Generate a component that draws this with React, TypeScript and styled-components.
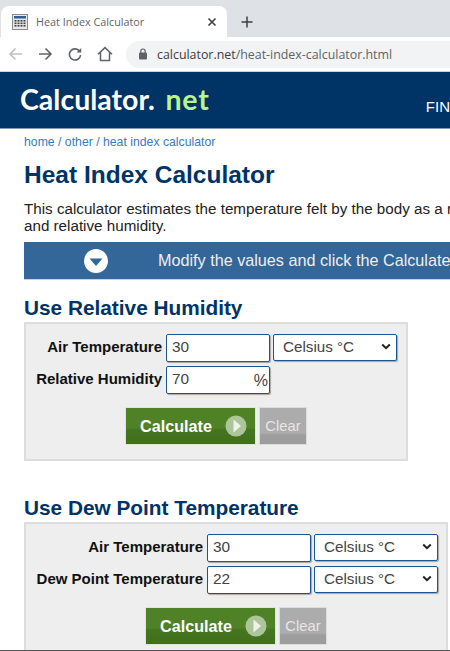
import React from "react";
import styled, { createGlobalStyle } from "styled-components";

const GlobalStyle = createGlobalStyle`
  html, body {
    margin: 0;
    padding: 0;
    background: #ffffff;
    overflow: hidden;
  }
  * {
    box-sizing: border-box;
  }
`;

const Page = styled.div`
  width: 450px;
  height: 651px;
  display: flex;
  flex-direction: column;
  overflow: hidden;
  font-family: "Liberation Sans", Arial, sans-serif;
  color: #222;
  border-bottom: 1px solid #555;
`;

const TabStrip = styled.div`
  height: 37px;
  flex: none;
  display: flex;
  align-items: flex-end;
  padding-left: 1px;
  background: #dee1e6;
`;

const Tab = styled.div`
  width: 226px;
  height: 31px;
  display: flex;
  align-items: center;
  padding: 0 10px 0 11px;
  background: #ffffff;
  border-radius: 8px 8px 0 0;
  font-family: "Open Sans", sans-serif;
  font-size: 10.8px;
  color: #5f6368;
`;

const TabTitle = styled.span`
  flex: 1;
  margin-left: 8px;
`;

const NewTab = styled.div`
  width: 40px;
  height: 31px;
  display: flex;
  align-items: center;
  justify-content: center;
  color: #3c4043;
`;

const Toolbar = styled.div`
  height: 35px;
  flex: none;
  display: flex;
  align-items: center;
  background: #ffffff;
  border-bottom: 1px solid #d0d3d8;
`;

const NavButton = styled.div<{ $dim?: boolean }>`
  width: 30px;
  height: 24px;
  display: flex;
  align-items: center;
  justify-content: center;
  color: ${({ $dim }) => ($dim ? "#bfc1c4" : "#5f6368")};
`;

const AddressBar = styled.div`
  flex: 1;
  height: 27px;
  margin-left: 6px;
  display: flex;
  align-items: center;
  gap: 9px;
  padding-left: 12px;
  background: #f1f3f4;
  border-radius: 14px 0 0 14px;
  font-family: "Open Sans", sans-serif;
  font-size: 12.4px;
  color: #5f6368;
  white-space: nowrap;
`;

const Host = styled.span`
  color: #3c4043;
`;

const SiteHeader = styled.header`
  height: 57px;
  flex: none;
  display: flex;
  align-items: center;
  justify-content: space-between;
  padding-left: 20px;
  background: #003366;
  border-bottom: 1px solid #7f9ab5;
  overflow: hidden;
`;

const Logo = styled.div`
  font-family: "Lato", sans-serif;
  font-size: 28.5px;
  font-weight: 700;
  line-height: 1;
  color: #ffffff;
  margin-top: -1px;
  white-space: nowrap;
`;

const LogoTld = styled.span`
  color: #b9f587;
  margin-left: 3px;
  letter-spacing: 0.8px;
`;

const HeaderNav = styled.span`
  margin-top: 13px;
  font-size: 15px;
  color: #ffffff;
`;

const Main = styled.main`
  flex: 1;
  min-height: 0;
  padding-left: 24px;
  overflow: hidden;
`;

const Breadcrumb = styled.div`
  margin-top: 6px;
  font-size: 12.25px;
  line-height: 14px;
  color: #3a7ab5;
`;

const Title = styled.h1`
  margin: 11px 0 0;
  font-size: 24.5px;
  line-height: 30px;
  font-weight: 700;
  color: #003366;
`;

const Intro = styled.p`
  margin: 10px 0 0;
  font-size: 15.2px;
  line-height: 17px;
  color: #222;
  white-space: nowrap;
`;

const Banner = styled.div`
  width: 426px;
  height: 38px;
  margin-top: 8px;
  display: flex;
  align-items: center;
  padding-left: 60px;
  gap: 50px;
  background: #336699;
  border-bottom: 1px solid #c5d3e2;
  font-size: 16.2px;
  color: #eeeeee;
  white-space: nowrap;
  overflow: hidden;
`;

const BannerIcon = styled.svg`
  flex: none;
`;

const SectionTitle = styled.h2<{ $top: number }>`
  margin: ${({ $top }) => $top}px 0 2px;
  font-size: 20.8px;
  line-height: 25px;
  font-weight: 700;
  color: #003366;
`;

const Panel = styled.div<{ $width: number }>`
  width: ${({ $width }) => $width}px;
  padding: 10px 10px 14px;
  background: #eeeeee;
  border: 2px solid #dddddd;
`;

const FormRow = styled.div<{ $labelWidth: number }>`
  display: grid;
  grid-template-columns: ${({ $labelWidth }) => $labelWidth}px 104px 123px;
  column-gap: 4px;
  align-items: start;
  height: 32px;
`;

const Label = styled.label`
  height: 28px;
  line-height: 26px;
  text-align: right;
  font-size: 15px;
  font-weight: 700;
  color: #111;
  white-space: nowrap;
`;

const InputBox = styled.div`
  position: relative;
  height: 28px;
  display: flex;
  align-items: center;
  padding: 0 0 2px 5px;
  background: #ffffff;
  border: 1px solid #1d5590;
  border-radius: 2px;
  box-shadow: 1px 1px 1px rgba(0, 0, 0, 0.3);
  font-size: 15.4px;
  color: #444;
`;

const Suffix = styled.span`
  position: absolute;
  right: 1px;
  top: 5px;
  font-size: 16px;
  color: #444;
`;

const SelectBox = styled.div`
  height: 27px;
  margin-left: -1px;
  display: flex;
  align-items: center;
  justify-content: space-between;
  padding: 0 5px 2px 9px;
  background: #ffffff;
  border: 1px solid #1d5590;
  border-radius: 2px;
  box-shadow: 1px 1px 1px rgba(0, 0, 0, 0.3);
  font-size: 15.2px;
  color: #444;
`;

const Actions = styled.div<{ $left: number }>`
  display: flex;
  gap: 3px;
  margin: 9px 0 0 ${({ $left }) => $left}px;
`;

const CalcButton = styled.div`
  width: 131px;
  height: 38px;
  display: flex;
  align-items: center;
  gap: 13px;
  padding-left: 14px;
  background: linear-gradient(#4f8226 0%, #4f8226 55%, #457520 60%, #41701d 100%);
  border: 1px solid #dfe5d9;
  font-size: 16.2px;
  font-weight: 700;
  color: #ffffff;
`;

const ClearButton = styled.div`
  width: 48px;
  height: 38px;
  display: flex;
  align-items: center;
  justify-content: center;
  background: linear-gradient(#acacac 0%, #acacac 70%, #9d9d9d 75%, #9d9d9d 100%);
  border: 1px solid #dcdcdc;
  font-size: 14.8px;
  color: #e6e6e6;
`;

const Favicon = () => (
  <svg width="16" height="16" viewBox="0 0 16 16">
    <rect x="0.5" y="0.5" width="15" height="15" fill="#e8e8e8" stroke="#8a8a8a" />
    <rect x="2" y="2" width="12" height="2.5" fill="#2f5f9a" />
    {[6, 8.5, 11].map((y) =>
      [2.5, 5.5, 8.5, 11.5].map((x) => <rect key={`${x}-${y}`} x={x} y={y} width="2" height="1.6" fill="#444" />),
    )}
  </svg>
);

const CloseIcon = () => (
  <svg width="10" height="10" viewBox="0 0 10 10">
    <path d="M1.5 1.5 8.5 8.5M8.5 1.5 1.5 8.5" stroke="#3c4043" strokeWidth="1.6" />
  </svg>
);

const PlusIcon = () => (
  <svg width="12" height="12" viewBox="0 0 12 12">
    <path d="M6 0.5V11.5M0.5 6H11.5" stroke="#3c4043" strokeWidth="1.5" />
  </svg>
);

const ArrowIcon = ({ flip }: { flip?: boolean }) => (
  <svg width="15" height="14" viewBox="0 0 15 14" style={flip ? { transform: "scaleX(-1)" } : undefined}>
    <path d="M1 7H13M7.5 1.5 13 7 7.5 12.5" fill="none" stroke="currentColor" strokeWidth="1.6" />
  </svg>
);

const ReloadIcon = () => (
  <svg width="14" height="14" viewBox="0 0 14 14">
    <path d="M11.6 4.2A5.6 5.6 0 1 0 12.6 8" fill="none" stroke="currentColor" strokeWidth="1.6" />
    <path d="M13.2 1V5.6H8.6Z" fill="currentColor" />
  </svg>
);

const HomeIcon = () => (
  <svg width="16" height="16" viewBox="0 0 16 16">
    <path d="M1 8.2 8 1.6 15 8.2M3.5 6.4V14.5H12.5V6.4" fill="none" stroke="currentColor" strokeWidth="1.5" />
  </svg>
);

const LockIcon = () => (
  <svg width="10" height="12" viewBox="0 0 10 12">
    <rect x="1" y="4.6" width="8" height="6.8" rx="1" fill="#5f6368" />
    <path d="M2.8 5V3.2a2.2 2.2 0 0 1 4.4 0V5" fill="none" stroke="#5f6368" strokeWidth="1.2" />
  </svg>
);

const ToggleIcon = () => (
  <BannerIcon width="24" height="24" viewBox="0 0 24 24">
    <circle cx="12" cy="12" r="12" fill="#ffffff" />
    <path d="M5.5 9.5H18.5L12 17Z" fill="#336699" />
  </BannerIcon>
);

const PlayIcon = () => (
  <svg width="22" height="22" viewBox="0 0 22 22">
    <circle cx="11" cy="11" r="10.5" fill="#acc59a" />
    <path d="M8.5 4.5 16 11 8.5 17.5Z" fill="#eef3ea" />
  </svg>
);

const ChevronIcon = () => (
  <svg width="10" height="7" viewBox="0 0 10 7">
    <path d="M1.2 1.5 5 5.2 8.8 1.5" fill="none" stroke="#222" strokeWidth="2" />
  </svg>
);

const UnitSelect = () => (
  <SelectBox>
    Celsius °C
    <ChevronIcon />
  </SelectBox>
);

const FormActions = ({ left }: { left: number }) => (
  <Actions $left={left}>
    <CalcButton>
      Calculate
      <PlayIcon />
    </CalcButton>
    <ClearButton>Clear</ClearButton>
  </Actions>
);

export default function App() {
  return (
    <Page>
      <GlobalStyle />
      <TabStrip>
        <Tab>
          <Favicon />
          <TabTitle>Heat Index Calculator</TabTitle>
          <CloseIcon />
        </Tab>
        <NewTab>
          <PlusIcon />
        </NewTab>
      </TabStrip>
      <Toolbar>
        <NavButton $dim>
          <ArrowIcon flip />
        </NavButton>
        <NavButton>
          <ArrowIcon />
        </NavButton>
        <NavButton>
          <ReloadIcon />
        </NavButton>
        <NavButton>
          <HomeIcon />
        </NavButton>
        <AddressBar>
          <LockIcon />
          <span>
            <Host>calculator.net</Host>/heat-index-calculator.html
          </span>
        </AddressBar>
      </Toolbar>
      <SiteHeader>
        <Logo>
          Calculator.<LogoTld> net</LogoTld>
        </Logo>
        <HeaderNav>FIN</HeaderNav>
      </SiteHeader>
      <Main>
        <Breadcrumb>home / other / heat index calculator</Breadcrumb>
        <Title>Heat Index Calculator</Title>
        <Intro>
          This calculator estimates the temperature felt by the body as a result of the air temperature
          <br />
          and relative humidity.
        </Intro>
        <Banner>
          <ToggleIcon />
          Modify the values and click the Calculate button to use
        </Banner>

        <SectionTitle $top={15}>Use Relative Humidity</SectionTitle>
        <Panel $width={384}>
          <FormRow $labelWidth={126}>
            <Label>Air Temperature</Label>
            <InputBox>30</InputBox>
            <UnitSelect />
          </FormRow>
          <FormRow $labelWidth={126}>
            <Label>Relative Humidity</Label>
            <InputBox>
              70
              <Suffix>%</Suffix>
            </InputBox>
          </FormRow>
          <FormActions left={89} />
        </Panel>

        <SectionTitle $top={34}>Use Dew Point Temperature</SectionTitle>
        <Panel $width={424}>
          <FormRow $labelWidth={167}>
            <Label>Air Temperature</Label>
            <InputBox>30</InputBox>
            <UnitSelect />
          </FormRow>
          <FormRow $labelWidth={167}>
            <Label>Dew Point Temperature</Label>
            <InputBox>22</InputBox>
            <UnitSelect />
          </FormRow>
          <FormActions left={109} />
        </Panel>
      </Main>
    </Page>
  );
}
